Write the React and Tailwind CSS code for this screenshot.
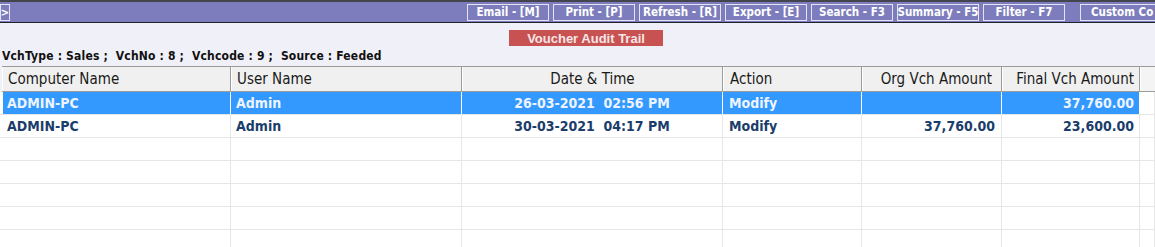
const buttons = [
  'Email - [M]',
  'Print - [P]',
  'Refresh - [R]',
  'Export - [E]',
  'Search - F3',
  'Summary - F5',
  'Filter - F7',
];

const columns = [
  { title: 'Computer Name', head: 'text-left pl-[5px]', cell: 'text-left pl-[4px]' },
  { title: 'User Name', head: 'text-left pl-[5px]', cell: 'text-left pl-[5px]' },
  { title: 'Date & Time', head: 'text-center', cell: 'text-center' },
  { title: 'Action', head: 'text-left pl-[6px]', cell: 'text-left pl-[6px]' },
  { title: 'Org Vch Amount', head: 'text-right pr-[9px]', cell: 'text-right pr-[6px]' },
  { title: 'Final Vch Amount', head: 'text-right pr-[5px]', cell: 'text-right pr-[5px]' },
  { title: '', head: '', cell: '' },
];

const rows = [
  ['ADMIN-PC', 'Admin', '26-03-2021  02:56 PM', 'Modify', '', '37,760.00', ''],
  ['ADMIN-PC', 'Admin', '30-03-2021  04:17 PM', 'Modify', '37,760.00', '23,600.00', ''],
];

const headGrid = 'grid grid-cols-[229px_231px_261px_139px_140px_138px_1fr]';
const bodyGrid = 'grid grid-cols-[231px_231px_261px_139px_140px_138px_1fr]';

function ToolButton({ label }) {
  return (
    <div className="flex h-[17px] w-[82px] items-center justify-center overflow-hidden whitespace-nowrap border border-[#e4e4f4] text-[11.5px] font-bold text-white">
      {label}
    </div>
  );
}

export default function App() {
  return (
    <div className="h-[247px] w-[1155px] overflow-hidden bg-[#f0f0f8] font-['DejaVu_Sans_Condensed','DejaVu_Sans',sans-serif]">
      <div className="h-[2px] bg-[#44444c]" />
      <div className="flex h-[20px] items-start overflow-hidden bg-[#7d7dbd] pt-[2px]">
        <div className="flex h-[17px] w-[10px] items-center justify-center border border-[#e4e4f4] text-[11px] font-bold leading-none text-white">
          &gt;
        </div>
        <div className="ml-[457px] flex gap-[4px]">
          {buttons.map((b) => (
            <ToolButton key={b} label={b} />
          ))}
        </div>
        <div className="ml-[15px] flex h-[17px] w-[80px] shrink-0 items-center whitespace-nowrap border border-r-0 border-[#e4e4f4] pl-[10px] text-[11.5px] font-bold text-white">
          Custom Co
        </div>
      </div>
      <div className="h-[1px] bg-[#22222e]" />

      <div className="h-[43px] pt-[7px]">
        <div className="ml-[509px] flex h-[16px] w-[154px] items-center justify-center bg-[#c85252] font-['Liberation_Sans',sans-serif] text-[13px] font-bold leading-none text-[#f6e6e6]">
          Voucher Audit Trail
        </div>
        <div className="mt-[1px] pl-[2px] text-[12px] font-bold leading-[18px] tracking-[0.18px] whitespace-pre text-[#111]">
          {'VchType : Sales ;  VchNo : 8 ;  Vchcode : 9 ;  Source : Feeded'}
        </div>
      </div>

      <div className={`${headGrid} ml-[2px] h-[26px] border-y border-[#9c9c9c] bg-[#f0f0f0] text-[15px] text-[#1a1a1a]`}>
        {columns.map((c, i) => (
          <div
            key={i}
            className={`flex h-full items-center border-l border-r border-l-white border-r-[#9c9c9c] ${c.head} ${
              c.head.includes('center') ? 'justify-center' : c.head.includes('right') ? 'justify-end' : ''
            } ${i === 6 ? 'border-r-0 bg-[#f4f4f4]' : ''}`}
          >
            {c.title}
          </div>
        ))}
      </div>

      <div className="bg-white">
        {rows.map((r, ri) => (
          <div key={ri} className={`${bodyGrid} h-[23px] border-b border-[#e6e6e6] text-[14px] font-bold`}>
            {r.map((v, ci) => {
              const sel = ri === 0 && ci < 6;
              return (
                <div
                  key={ci}
                  className={`flex items-center whitespace-pre ${columns[ci].cell} ${
                    columns[ci].cell.includes('center') ? 'justify-center' : columns[ci].cell.includes('right') ? 'justify-end' : ''
                  } ${sel ? 'border-r border-white bg-[#3399ff] text-[#eef4ff]' : 'border-r border-[#e6e6e6] text-[#1a3d6b]'} ${
                    ci === 0 ? 'ml-[3px]' : ''
                  }`}
                >
                  {v}
                </div>
              );
            })}
          </div>
        ))}
        {Array.from({ length: 5 }).map((_, i) => (
          <div key={i} className={`${bodyGrid} h-[23px] border-b border-[#e6e6e6]`}>
            {columns.map((c, ci) => (
              <div key={ci} className="border-r border-[#e6e6e6]" />
            ))}
          </div>
        ))}
      </div>
    </div>
  );
}
